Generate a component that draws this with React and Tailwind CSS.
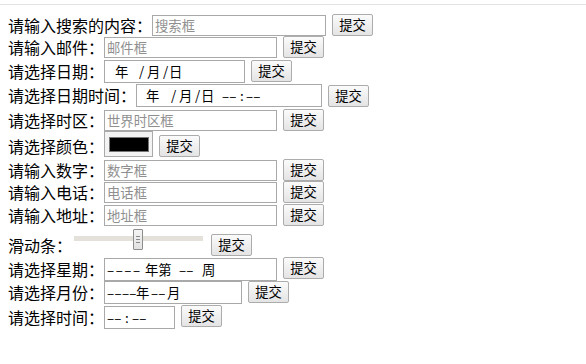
import React from "react";

const Label = ({ children, cls = "" }) => (
  <span className={`shrink-0 whitespace-nowrap text-[16px] leading-[22px] text-black ${cls}`}>{children}</span>
);

const Btn = ({ cls = "" }) => (
  <div
    className={`ml-[6px] flex h-[22px] w-[41px] shrink-0 items-center justify-center rounded-[2px] border border-[#acacac] bg-linear-to-b from-[#fbfbfb] to-[#e4e4e4] text-[13.33px] leading-none text-black ${cls}`}
  >
    提交
  </div>
);

const TextBox = ({ children, w = "w-[173px]" }) => (
  <div
    className={`flex h-[21px] shrink-0 items-center border border-[#a9a9a9] bg-white pl-[2px] text-[13.33px] leading-none text-[#8f8f8f] ${w}`}
  >
    {children}
  </div>
);

const DateBox = ({ children, w, pl }) => (
  <div
    className={`flex h-[23px] shrink-0 items-center border border-[#a9a9a9] bg-white text-[13.33px] leading-none text-black ${w} ${pl}`}
  >
    {children}
  </div>
);

const Seg = ({ w, children, cls = "" }) => (
  <span className={`inline-block shrink-0 whitespace-pre ${w} ${cls}`}>{children}</span>
);

const Row = ({ h, children }) => <div className={`flex items-end ${h}`}>{children}</div>;

export default function App() {
  return (
    <div className="min-h-[364px] w-[586px] bg-white font-['Noto_Sans_CJK_SC','Noto_Sans',sans-serif]">
      <div className="h-[4px]" />
      <div className="h-px bg-[#e3e3e3]" />
      <div className="flex flex-col pl-[8px] pt-[8px]">
        <Row h="h-[23px]">
          <Label>请输入搜索的内容：</Label>
          <TextBox w="w-[174px]">搜索框</TextBox>
          <Btn />
        </Row>
        <Row h="h-[22px]">
          <Label>请输入邮件：</Label>
          <TextBox>邮件框</TextBox>
          <Btn />
        </Row>
        <Row h="h-[25px]">
          <Label cls="mb-[1px]">请选择日期：</Label>
          <DateBox w="w-[141px]" pl="pl-[10px]">
            <Seg w="w-[24px]">年</Seg>
            <Seg w="w-[8px]">/</Seg>
            <Seg w="w-[16px]">月</Seg>
            <Seg w="w-[6px]">/</Seg>
            <Seg w="w-[14px]">日</Seg>
          </DateBox>
          <Btn cls="mb-[1px]" />
        </Row>
        <Row h="h-[24px]">
          <Label cls="mb-[1px]">请选择日期时间：</Label>
          <DateBox w="w-[186px]" pl="pl-[9px]">
            <Seg w="w-[25px]">年</Seg>
            <Seg w="w-[8px]">/</Seg>
            <Seg w="w-[16px]">月</Seg>
            <Seg w="w-[6px]">/</Seg>
            <Seg w="w-[21px]">日</Seg>
            <Seg w="w-[18px]">––</Seg>
            <Seg w="w-[6px]">:</Seg>
            <Seg w="w-[14px]">––</Seg>
          </DateBox>
          <Btn />
        </Row>
        <Row h="h-[24px]">
          <Label>请选择时区：</Label>
          <TextBox>世界时区框</TextBox>
          <Btn />
        </Row>
        <Row h="h-[26px]">
          <Label>请选择颜色：</Label>
          <div className="flex h-[26px] w-[49px] shrink-0 items-center justify-center border border-[#a9a9a9] bg-[#f3f3f3]">
            <div className="h-[15px] w-[40px] border border-[#767676] bg-black" />
          </div>
          <Btn />
        </Row>
        <Row h="h-[24px]">
          <Label>请输入数字：</Label>
          <TextBox>数字框</TextBox>
          <Btn />
        </Row>
        <Row h="h-[22px]">
          <Label>请输入电话：</Label>
          <TextBox>电话框</TextBox>
          <Btn />
        </Row>
        <Row h="h-[23px]">
          <Label>请输入地址：</Label>
          <TextBox>地址框</TextBox>
          <Btn />
        </Row>
        <Row h="h-[30px]">
          <Label>滑动条：</Label>
          <div className="relative mb-[6px] ml-[2px] h-[21px] w-[129px] shrink-0">
            <div className="mt-[7px] h-[5px] w-full bg-[#e4e0da]" />
            <div className="absolute left-[59px] top-0 flex h-[21px] w-[10px] flex-col items-center justify-center gap-[2px] rounded-[1px] border border-[#8e8e8e] bg-linear-to-b from-[#f4f4f4] to-[#e2e2e2]">
              <div className="h-px w-[4px] bg-[#8a8a8a]" />
              <div className="h-px w-[4px] bg-[#8a8a8a]" />
              <div className="h-px w-[4px] bg-[#8a8a8a]" />
            </div>
          </div>
          <Btn cls="ml-[8px]" />
        </Row>
        <Row h="h-[25px]">
          <Label cls="mb-[1px]">请选择星期：</Label>
          <DateBox w="w-[173px]" pl="pl-[2px]">
            <Seg w="w-[38px]" cls="tracking-[1.5px]">––––</Seg>
            <Seg w="w-[34px]">年第</Seg>
            <Seg w="w-[23px]">––</Seg>
            <Seg w="w-[14px]">周</Seg>
          </DateBox>
          <Btn cls="mb-[2px]" />
        </Row>
        <Row h="h-[23px]">
          <Label cls="mb-[1px]">请选择月份：</Label>
          <DateBox w="w-[138px]" pl="pl-[2px]">
            <Seg w="w-[29px]" cls="tracking-[0.3px]">––––</Seg>
            <Seg w="w-[15px]">年</Seg>
            <Seg w="w-[16px]">––</Seg>
            <Seg w="w-[14px]">月</Seg>
          </DateBox>
          <Btn cls="mb-[1px]" />
        </Row>
        <Row h="h-[25px]">
          <Label cls="mb-[1px]">请选择时间：</Label>
          <DateBox w="w-[71px]" pl="pl-[2px]">
            <Seg w="w-[18px]">––</Seg>
            <Seg w="w-[7px]">:</Seg>
            <Seg w="w-[14px]">––</Seg>
          </DateBox>
          <Btn cls="mb-[2px]" />
        </Row>
      </div>
    </div>
  );
}
